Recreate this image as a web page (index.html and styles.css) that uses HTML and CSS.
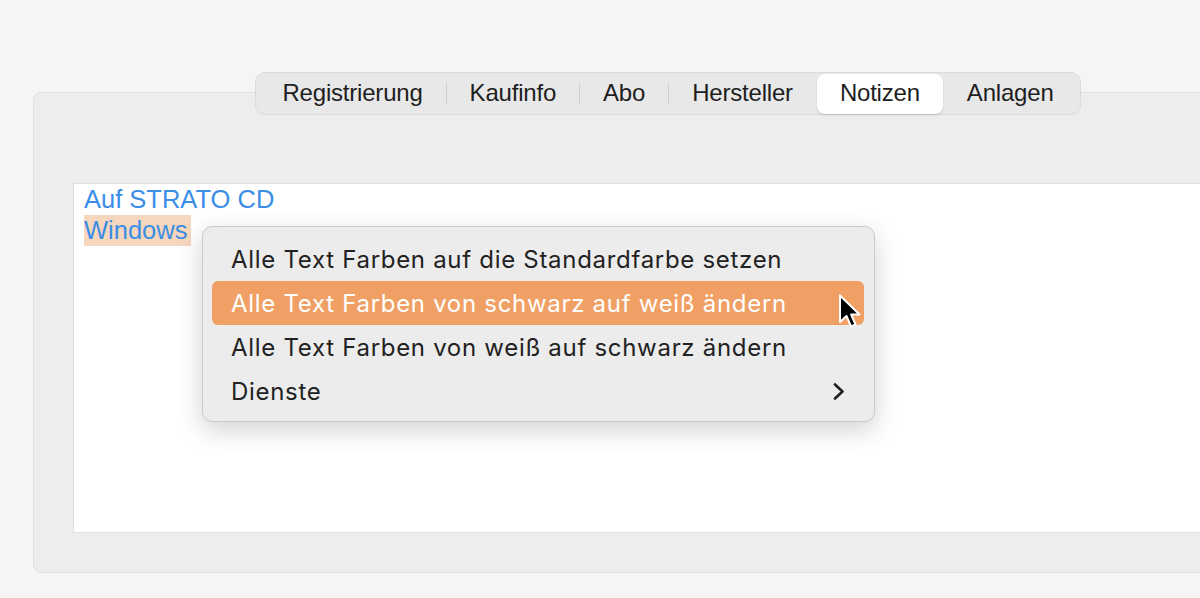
FILE: index.html
```
<!DOCTYPE html>
<html lang="de">
<head>
    <meta charset="UTF-8">
    <title>Notizen</title>
    <link rel="stylesheet" href="styles.css">
</head>
<body>
    <div class="window">
        <div class="group">
            <div class="tabs">
                <div class="tab">Registrierung</div>
                <div class="sep"></div>
                <div class="tab">Kaufinfo</div>
                <div class="sep"></div>
                <div class="tab">Abo</div>
                <div class="sep"></div>
                <div class="tab">Hersteller</div>
                <div class="sep hidden"></div>
                <div class="tab active">Notizen</div>
                <div class="sep hidden"></div>
                <div class="tab">Anlagen</div>
            </div>
            <div class="notes">
                <div class="line">Auf STRATO CD</div>
                <div class="line"><span class="sel">Windows</span></div>
            </div>
        </div>

        <div class="menu">
            <div class="item">Alle Text Farben auf die Standardfarbe setzen</div>
            <div class="item hover">Alle Text Farben von schwarz auf weiß ändern</div>
            <div class="item">Alle Text Farben von weiß auf schwarz ändern</div>
            <div class="item">Dienste
                <svg class="chev" width="12" height="17" viewBox="0 0 12 17"><path d="M2 1.5 L9.5 8.5 L2 15.5" fill="none" stroke="#1e1e1e" stroke-width="2.6" stroke-linecap="round" stroke-linejoin="round"/></svg>
            </div>
        </div>

        <svg class="cursor" width="26" height="38" viewBox="0 0 26 38">
            <path d="M2 1.5 L2 28 L8.5 22 L13 32.5 L17.5 30.5 L13.2 20.5 L21.5 20.5 Z" fill="#000" stroke="#fff" stroke-width="2" stroke-linejoin="round"/>
        </svg>
    </div>
</body>
</html>
```

FILE: styles.css
```
html, body { margin: 0; height: 100%; }
body { background: #f5f5f5; font-family: "Liberation Sans", Arial, sans-serif; }
.window { position: relative; height: 100%; overflow: hidden; }
.group { margin: 92px 0 0 33px; width: 1270px; height: 481px; box-sizing: border-box; background: #ededed; border: 1px solid #e1e1e1; border-radius: 8px; display: flex; flex-direction: column; align-items: center; }
.tabs { display: flex; align-items: center; margin-top: -21px; height: 43px; box-sizing: border-box; padding: 0 3px; background: #e8e8e8; border: 1px solid #dadada; border-radius: 10px; }
.tab { padding: 0 23px; height: 40px; line-height: 37px; font-size: 24px; letter-spacing: -0.2px; color: #1e1e1e; border-radius: 8px; }
.tab.active { background: #fff; box-shadow: 0 1px 2px rgba(0,0,0,0.15); }
.sep { width: 1px; height: 22px; background: #cfcfcf; }
.sep.hidden { background: transparent; }
.notes { align-self: stretch; margin: 68px 39px 0; height: 350px; box-sizing: border-box; background: #fff; border: 1px solid #dedede; border-right: none; padding: 0 10px; }
.line { font-size: 25.5px; line-height: 31px; color: #3a8ee6; }
.sel { display: inline-block; background: #f6d6bd; padding-right: 4px; }
.menu { position: absolute; left: 202px; top: 226px; width: 673px; height: 196px; box-sizing: border-box; padding: 10px 10px 10px 9px; background: #ececec; border: 1px solid #cbcbcb; border-radius: 10px; box-shadow: 0 8px 26px rgba(0,0,0,0.18); }
.item { display: flex; align-items: center; justify-content: space-between; height: 44px; padding: 0 19px; font-family: Inter, "Liberation Sans", sans-serif; font-size: 24px; letter-spacing: 0.7px; color: #222; border-radius: 6px; }
.item.hover { background: #f0a064; color: #fff; }
.cursor { position: absolute; left: 838px; top: 294px; }
```
